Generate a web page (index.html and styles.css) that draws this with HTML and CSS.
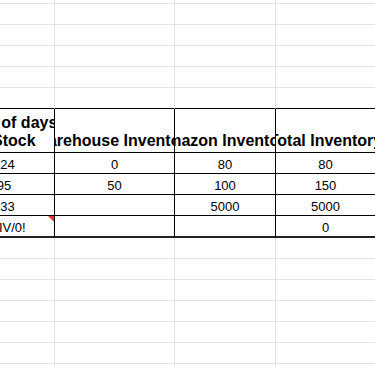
FILE: index.html
```html
<!DOCTYPE html>
<html>
<head>
<meta charset="utf-8">
<link rel="stylesheet" href="styles.css">
</head>
<body>
<div class="sheet">
  <div class="c"></div><div class="c"></div><div class="c"></div><div class="c"></div>
  <div class="c"></div><div class="c"></div><div class="c"></div><div class="c"></div>
  <div class="c"></div><div class="c"></div><div class="c"></div><div class="c"></div>
  <div class="c"></div><div class="c"></div><div class="c"></div><div class="c"></div>
  <div class="c"></div><div class="c"></div><div class="c"></div><div class="c"></div>
  <div class="c top"></div><div class="c top"></div><div class="c top"></div><div class="c top"></div>

  <div class="c hd b"><span>Count of days<br>of Stock</span></div>
  <div class="c hd b"><span>Warehouse Inventory</span></div>
  <div class="c hd b"><span>Amazon Inventory</span></div>
  <div class="c hd b"><span>Total Inventory</span></div>

  <div class="c b"><span>124</span></div>
  <div class="c b"><span>0</span></div>
  <div class="c b"><span>80</span></div>
  <div class="c b"><span>80</span></div>

  <div class="c b"><span>95</span></div>
  <div class="c b"><span>50</span></div>
  <div class="c b"><span>100</span></div>
  <div class="c b"><span>150</span></div>

  <div class="c b"><span>133</span></div>
  <div class="c b"></div>
  <div class="c b"><span>5000</span></div>
  <div class="c b"><span>5000</span></div>

  <div class="c b last err"><span>#DIV/0!</span></div>
  <div class="c b last"></div>
  <div class="c b last"></div>
  <div class="c b last"><span>0</span></div>

  <div class="c"></div><div class="c"></div><div class="c"></div><div class="c"></div>
  <div class="c"></div><div class="c"></div><div class="c"></div><div class="c"></div>
  <div class="c"></div><div class="c"></div><div class="c"></div><div class="c"></div>
  <div class="c"></div><div class="c"></div><div class="c"></div><div class="c"></div>
  <div class="c"></div><div class="c"></div><div class="c"></div><div class="c"></div>
  <div class="c"></div><div class="c"></div><div class="c"></div><div class="c"></div>
  <div class="c"></div><div class="c"></div><div class="c"></div><div class="c"></div>
</div>
</body>
</html>
```

FILE: styles.css
```css
html, body {
  margin: 0;
  padding: 0;
  background: #ffffff;
  overflow: hidden;
  width: 375px;
  height: 366px;
}

.sheet {
  display: grid;
  grid-template-columns: 101px 120px 101px 100px;
  grid-auto-rows: minmax(21px, auto);
  margin: -17px 0 0 -46px;
  font-family: "Liberation Sans", Arial, sans-serif;
  font-size: 13px;
  color: #000000;
}

.c {
  box-sizing: border-box;
  height: 21px;
  border-right: 1px solid #e2e3e3;
  border-bottom: 1px solid #e2e3e3;
  display: flex;
  justify-content: center;
  align-items: flex-end;
  overflow: hidden;
  white-space: nowrap;
  line-height: 15px;
  padding-bottom: 1px;
  position: relative;
}

.c span {
  flex: none;
  text-align: center;
}

.top {
  border-bottom-color: #000000;
}

.b {
  border-right-color: #000000;
  border-bottom-color: #000000;
}

.hd {
  height: 44px;
  font-size: 16px;
  font-weight: bold;
  line-height: 18px;
  padding-bottom: 2px;
}

.last {
  height: 22px;
  border-bottom-width: 2px;
  border-bottom-color: #222222;
}

.err::after {
  content: "";
  position: absolute;
  top: 0;
  right: 0;
  border-style: solid;
  border-width: 0 6px 6px 0;
  border-color: transparent #e53935 transparent transparent;
}
```
